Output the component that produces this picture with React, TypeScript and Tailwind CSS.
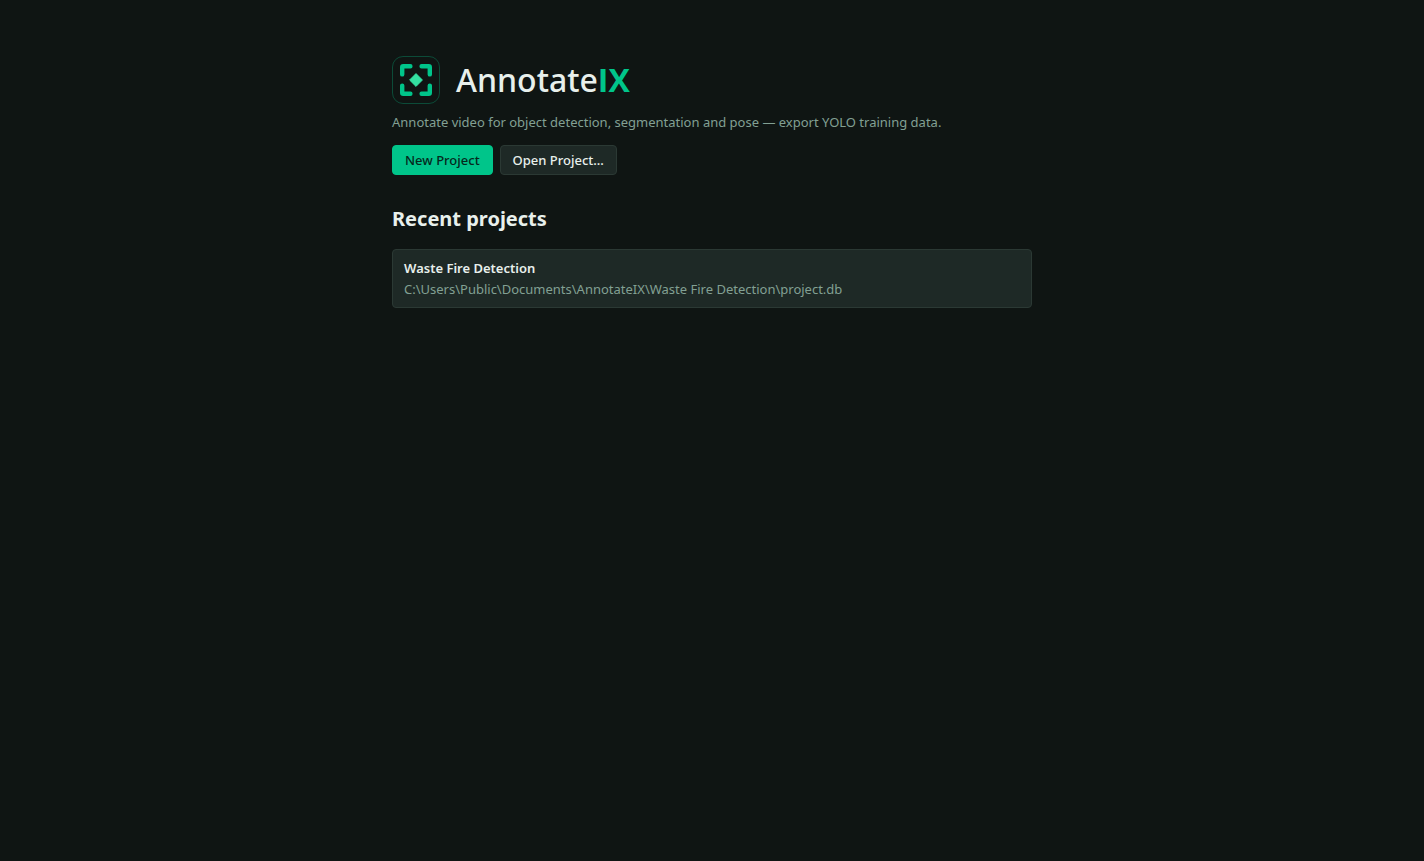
import { useState } from "react"

type Project = { name: string; path: string }

const recentProjects: Project[] = [
  {
    name: "Waste Fire Detection",
    path: "C:\\Users\\Public\\Documents\\AnnotateIX\\Waste Fire Detection\\project.db",
  },
]

function Logo() {
  return (
    <svg viewBox="0 0 48 48" className="size-12 shrink-0" fill="none" aria-hidden="true">
      <rect x="0.5" y="0.5" width="47" height="47" rx="10.5" fill="#0f1513" stroke="#0c4b38" />
      {/* Corner brackets */}
      <path
        d="M10.2 18.4V11.2a1 1 0 0 1 1-1h7.2M29.6 10.2H36.8a1 1 0 0 1 1 1v7.2M37.8 29.6V36.8a1 1 0 0 1-1 1h-7.2M18.4 37.8H11.2a1 1 0 0 1-1-1v-7.2"
        stroke="#00c58a"
        strokeWidth="4.4"
        strokeLinecap="round"
      />
      <path d="M24 17.6L30.4 24L24 30.4L17.6 24Z" fill="#34e0a1" stroke="#34e0a1" strokeLinejoin="round" />
    </svg>
  )
}

export default function App() {
  const [selected, setSelected] = useState<string | null>(null)

  return (
    <div className="min-h-screen bg-[#0f1513] px-6 py-14 font-['Segoe_UI','Noto_Sans',sans-serif] text-[#e8f0ec]">
      <main className="mx-auto max-w-[640px]">
        <header className="flex items-center gap-4">
          <Logo />
          <h1 className="text-[32px] leading-12 font-medium">
            Annotate
            <span className="font-['Segoe_UI','Open_Sans',sans-serif] font-bold text-[#00c58a]">IX</span>
          </h1>
        </header>

        <p className="mt-2 text-[13px] leading-5 text-[#82a093]">
          Annotate video for object detection, segmentation and pose — export YOLO training data.
        </p>

        <div className="mt-[13px] flex gap-[7px] text-[13px] leading-5">
          <button
            type="button"
            className="rounded-[4px] border border-[#00c58a] bg-[#00c58a] px-3 py-1 font-medium text-[#06281c]"
          >
            New Project
          </button>
          <button
            type="button"
            className="rounded-[4px] border border-[#2b3934] bg-[#1e2926] px-3 py-1 font-medium"
          >
            Open Project...
          </button>
        </div>

        {/* Recent projects */}
        <section className="mt-7">
          <h2 className="text-xl leading-8 font-bold">Recent projects</h2>
          <ul className="mt-[14px] space-y-2">
            {recentProjects.map((project) => (
              <li key={project.path}>
                <button
                  type="button"
                  onClick={() => setSelected(project.path)}
                  aria-pressed={selected === project.path}
                  className="block w-full rounded-[4px] border border-[#2b3934] bg-[#1e2926] px-[11px] py-2 text-left text-[13px] leading-5"
                >
                  <span className="block font-semibold">{project.name}</span>
                  <span className="mt-px block text-[#82a093]">{project.path}</span>
                </button>
              </li>
            ))}
          </ul>
        </section>
      </main>
    </div>
  )
}
